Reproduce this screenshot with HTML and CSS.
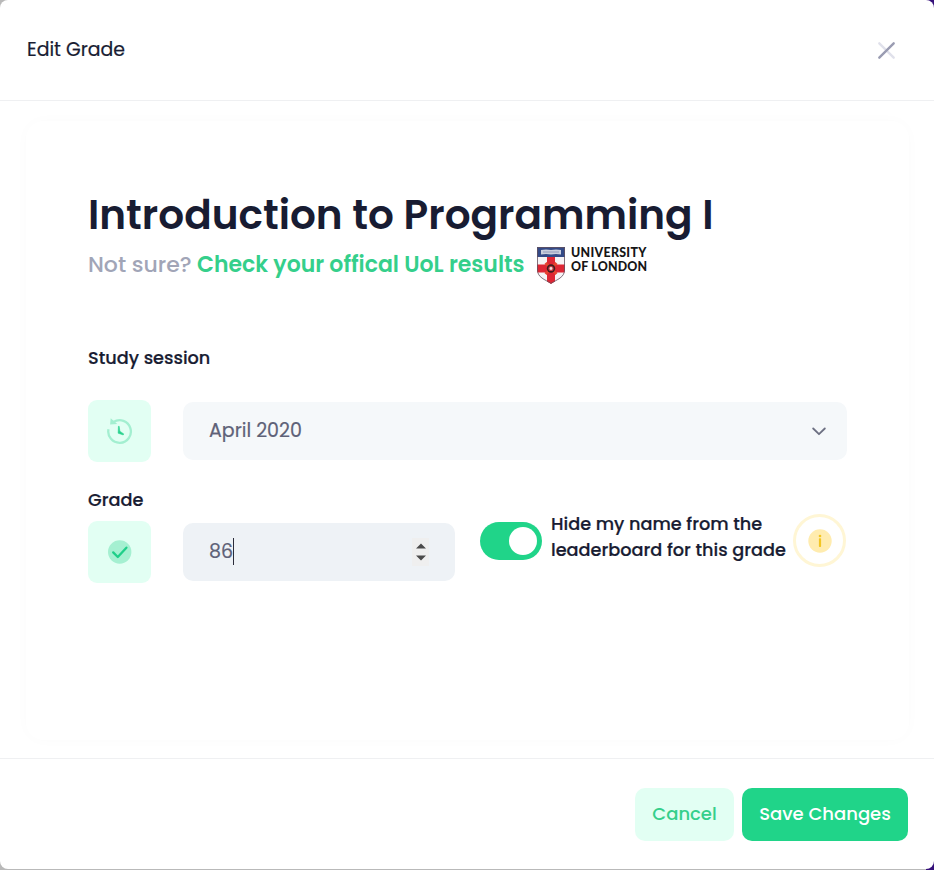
FILE: index.html
```html
<!DOCTYPE html>
<html lang="en">
<head>
<meta charset="utf-8">
<title>Edit Grade</title>
<link rel="stylesheet" href="styles.css">
</head>
<body>
<div class="modal">
  <header class="modal-header">
    <h5 class="modal-title"><span>Edit Grade</span></h5>
    <button class="close" aria-label="Close">
      <svg width="20" height="20" viewBox="0 0 20 20" fill="none" stroke-linecap="round" stroke-width="2.4">
        <path d="M2.300 2.300 16.700 16.700" stroke="#e0e1eb"/>
        <path d="M16.700 2.300 2.300 16.700" stroke="#9a9cb2"/>
      </svg>
    </button>
  </header>

  <main class="modal-body">
    <section class="card">
      <h1 class="course"><span>Introduction to Programming I</span></h1>
      <div class="hint">
        <span class="muted">Not sure?</span>
        <a class="link"><span>Check your offical UoL results</span></a>
        <svg class="crest" width="28" height="37" viewBox="0 0 28 37">
          <clipPath id="shield"><path d="M0 0H28V23C28 31 20 33 14 37C8 33 0 31 0 23Z"/></clipPath>
          <g clip-path="url(#shield)">
            <rect width="28" height="37" fill="#f6f3f5"/>
            <rect width="28" height="10" fill="#344a87"/>
            <path d="M4 3Q9 2 14 3Q19 2 24 3V7.600Q19 6.600 14 7.600Q9 6.600 4 7.600Z" fill="#c9cedd"/>
            <path d="M6 5h16" stroke="#8690b2" stroke-width=".8"/>
            <path d="M10 10h8V37h-8zM0 17.500h28v8H0z" fill="#de2634"/>
            <path d="M8.500 16 19.500 27M19.500 16 8.500 27" stroke="#e5432f" stroke-width="3"/>
            <circle cx="14" cy="21.500" r="4.200" fill="#3e1c20"/>
            <circle cx="14" cy="21.500" r="2.600" fill="#c8404a"/>
            <circle cx="14" cy="21.500" r="1.400" fill="#f3dede"/>
          </g>
          <path d="M.5 .5H27.500V23C27.500 30.500 20 32.500 14 36.400C8 32.500 .5 30.500 .5 23Z" fill="none" stroke="#64525e" stroke-width=".8"/>
        </svg>
        <div class="uol"><span>UNIVERSITY</span><span class="uol-b">OF LONDON</span></div>
      </div>

      <label class="label session-label"><span>Study session</span></label>
      <div class="row session-row">
        <div class="tile">
          <svg class="clock" width="28" height="28" viewBox="0 0 28 28" fill="none">
            <path d="M3.500 12.200A11.300 11.300 0 1 0 8.500 5" stroke="#a3efd0" stroke-width="2.300"/>
            <path d="M5.700 1.200 5.100 7.600 12.300 7.100Z" fill="#a3efd0"/>
            <path d="M13.400 9.300h.8l.7 4.900 3.900 2.700-.6 1.100-5.100-1.800Z" fill="#2bd28e" stroke="#2bd28e" stroke-width=".5"/>
          </svg>
        </div>
        <div class="field select">
          <span class="value">April 2020</span>
          <svg width="14" height="9" viewBox="0 0 14 9" fill="none" stroke="#6d7082" stroke-width="1.800" stroke-linecap="round" stroke-linejoin="round"><path d="M1.200 1.500 7 7.200 12.800 1.500"/></svg>
        </div>
      </div>

      <div class="row grade-row">
        <div class="grade-icon">
          <label class="label grade-label"><span>Grade</span></label>
          <div class="tile">
            <svg width="24" height="24" viewBox="0 0 24 24" fill="none">
              <circle cx="11.700" cy="12" r="11.700" fill="#a5f0d1"/>
              <path d="M5.200 12.400 9.800 17 18.400 7.700" stroke="#1fcf89" stroke-width="2.300" stroke-linecap="round" stroke-linejoin="round"/>
            </svg>
          </div>
        </div>
        <div class="field number">
          <span class="value">86</span><i class="caret"></i>
          <div class="spinner">
            <svg width="10" height="18" viewBox="0 0 10 18" fill="#4b4b4b"><path d="M0 5.500 5 .5 10 5.500ZM0 12.500 5 17.500 10 12.500Z"/></svg>
          </div>
        </div>
        <div class="switch"><i></i></div>
        <div class="label privacy"><span>Hide my name from the</span><span>leaderboard for this grade</span></div>
        <div class="info">
          <svg width="24" height="24" viewBox="0 0 24 24"><circle cx="12" cy="12" r="11.700" fill="#ffecaf"/><circle cx="12" cy="7" r="1.300" fill="#f3c623"/><rect x="10.900" y="9.200" width="2.200" height="8.800" rx=".7" fill="#f3c623"/></svg>
        </div>
      </div>
    </section>
  </main>

  <footer class="modal-footer">
    <button class="btn cancel"><span>Cancel</span></button>
    <button class="btn save"><span>Save Changes</span></button>
  </footer>
</div>
</body>
</html>
```
FILE: styles.css
```css
* { box-sizing: border-box; }
body {
  margin: 0;
  height: 870px;
  overflow: hidden;
  background: linear-gradient(90deg, #b9b9b9 0 926px, #35107a 926px);
  font-family: Poppins, Inter, "Open Sans", sans-serif;
  color: #181c32;
}
button { border: 0; font: inherit; padding: 0; background: none; }
h1, h5 { margin: 0; font-weight: 500; }
span { white-space: nowrap; }

.modal {
  height: 869px;
  background: #fff;
  border-radius: 8px;
  display: flex;
  flex-direction: column;
}
.modal-header {
  height: 101px;
  padding: 0 37px 0 27px;
  border-bottom: 1px solid #eff0f2;
  display: flex;
  align-items: center;
  justify-content: space-between;
}
.modal-title { font-size: 18.9px; font-weight: 400; line-height: 28px; margin-top: -1px; -webkit-text-stroke: 0.2px; }
.close { width: 20px; height: 20px; margin-top: 1px; }
.close svg { display: block; }

.modal-body { height: 657px; padding: 20px 25px 18px 26px; }
.card {
  height: 619px;
  padding: 69px 62px 0 62px;
  border-radius: 18px;
  box-shadow: 0 0 14px rgba(76, 87, 125, 0.02);
}
.course { font-size: 40.6px; line-height: 50px; font-weight: 600; }
.hint { display: flex; height: 48px; font-size: 22px; line-height: 50px; }
.muted { color: #a1a5b7; font-size: 22px; font-weight: 500; width: 109px; }
.link { color: #35cf8b; font-weight: 600; width: 340px; }
.crest { margin-top: 7px; }
.uol {
  margin: 6px 0 0 6px;
  display: flex;
  flex-direction: column;
  font: 900 12.4px/14px Lato, "Open Sans", sans-serif;
  letter-spacing: 0.3px;
  color: #161616;
}
.uol-b { letter-spacing: 0.2px; }

.label { font-size: 17.7px; font-weight: 500; line-height: 26px; display: block; -webkit-text-stroke: 0.2px; }
.session-label { margin-top: 57px; }
.row { display: flex; }
.tile {
  width: 63px;
  height: 62px;
  border-radius: 9px;
  background: #e2fff3;
  display: flex;
  align-items: center;
  justify-content: center;
}
.clock { margin-right: 2px; }
.session-row { margin-top: 29px; align-items: center; gap: 32px; }
.field {
  height: 58px;
  border-radius: 10px;
  padding: 0 21px 0 26px;
  background: #f5f8fa;
  color: #5e6278;
  font-size: 19px;
  display: flex;
  align-items: center;
}
.value { margin-top: -2px; -webkit-text-stroke: 0.2px; }
.select { flex: 1; justify-content: space-between; }
.grade-row { margin-top: 25px; }
.grade-icon { width: 63px; }
.grade-icon .tile { margin-top: 8px; }
.number { width: 272px; margin: 36px 0 0 32px; padding: 0 26px; background: #eef2f6; }
.caret { width: 1px; height: 27px; background: #2b2c3a; margin-top: -1px; }
.spinner {
  margin-left: auto;
  width: 17px;
  height: 28px;
  background: #efefef;
  display: flex;
  align-items: center;
  justify-content: center;
}
.switch {
  margin: 35px 0 0 25px;
  width: 62px;
  height: 38px;
  padding: 5px;
  border-radius: 19px;
  background: #20d489;
  display: flex;
  justify-content: flex-end;
}
.switch i { width: 28px; height: 28px; border-radius: 50%; background: #fff; }
.privacy { margin: 24px 0 0 9px; width: 242px; display: flex; flex-direction: column; }
.info {
  margin-top: 27px;
  width: 53px;
  height: 53px;
  border: 3px solid #fff6d5;
  border-radius: 50%;
  display: flex;
  align-items: center;
  justify-content: center;
}

.modal-footer {
  height: 111px;
  border-top: 1px solid #eff0f2;
  padding: 29px 26px 0 0;
  display: flex;
  justify-content: flex-end;
  gap: 8px;
}
.btn { height: 53px; border-radius: 10px; font-size: 18px; font-weight: 500; padding-bottom: 2px; }
.cancel { width: 99px; background: #e2fff3; color: #35cf8b; }
.save { width: 166px; background: #20d489; color: #fff; }
```
